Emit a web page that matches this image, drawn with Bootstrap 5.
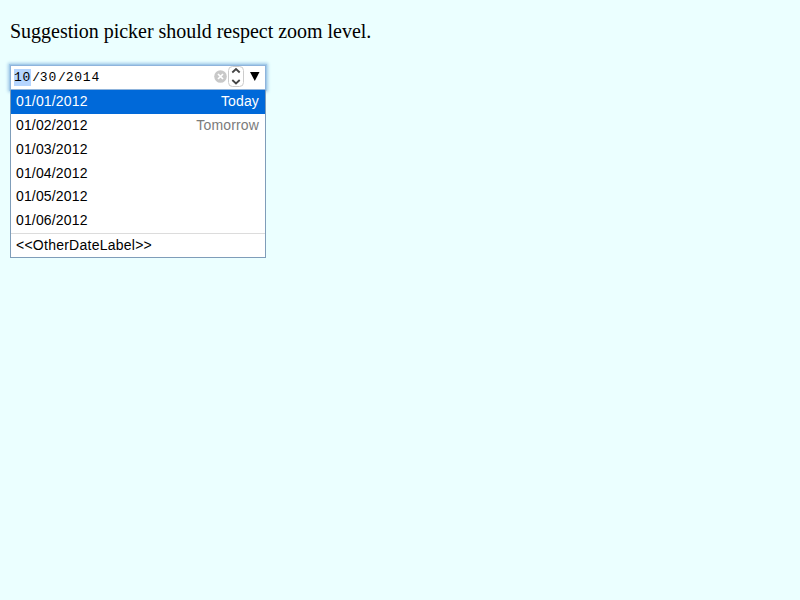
<!DOCTYPE html>
<html lang="en">
<head>
<meta charset="utf-8">
<meta name="viewport" content="width=device-width, initial-scale=1">
<title>Suggestion picker</title>
<link href="https://cdn.jsdelivr.net/npm/bootstrap@5.3.0/dist/css/bootstrap.min.css" rel="stylesheet">
<style>
body{background:#ebffff;color:#000;padding:20px 10px 0}
.intro{font:20px/23px "Liberation Serif",serif;margin-bottom:22px;white-space:nowrap;letter-spacing:-.02px}
.picker{width:256px}
.date-box{height:25px;background:#fff;border:1px solid #8fb4dc;box-shadow:0 0 0 1px #a3cbe9,0 0 3px 2px #a3cbe9;font:13px/17px "Liberation Mono",monospace;padding-left:3px}
.field{height:17px;letter-spacing:.8px}
.separator{padding-left:1px;margin-right:-1px}
.active-field{background:#b5d5ff}
.suggestions{height:168px;background:#fff;border:1px solid #7f9db9;border-top:0;font:14px/23px "Liberation Sans",sans-serif}
.entry{height:23.85px;padding:0 6px 0 5px;letter-spacing:.15px}
.chosen{background:#0069d9;color:#fff}
.note{color:#7b7b7b}
.other{border-top:1px solid #dcdcdc;height:24px;padding-left:5px;letter-spacing:.25px}
</style>
<script src="https://cdn.jsdelivr.net/npm/bootstrap@5.3.0/dist/js/bootstrap.bundle.min.js"></script>
</head>
<body>
<p class="intro">Suggestion picker should respect zoom level.</p>
<main class="picker">
<div class="date-box d-flex align-items-center">
<span class="field active-field">10</span><span class="field separator">/</span><span class="field">30</span><span class="field separator">/</span><span class="field">2014</span>
<svg class="ms-auto" width="52" height="23" viewBox="213 66 52 23"><circle cx="220.5" cy="76.5" r="6.3" fill="#c8c8c8"/><path d="M218 74l5 5m0-5l-5 5" stroke="#fff" stroke-width="1.7"/><rect x="228.5" y="66.5" width="15" height="20" rx="4" fill="#fff" stroke="#ccc"/><path d="M232.3 72.5l3.7-3.5 3.7 3.5m-7.4 7.5l3.7 3.5 3.7-3.5" fill="none" stroke="#444" stroke-width="1.8"/><path d="M250 72h9.5l-4.7 9z"/></svg>
</div>
<div class="suggestions">
<div class="entry chosen d-flex justify-content-between"><span>01/01/2012</span><span>Today</span></div>
<div class="entry d-flex justify-content-between"><span>01/02/2012</span><span class="note">Tomorrow</span></div>
<div class="entry">01/03/2012</div>
<div class="entry">01/04/2012</div>
<div class="entry">01/05/2012</div>
<div class="entry">01/06/2012</div>
<div class="other">&lt;&lt;OtherDateLabel&gt;&gt;</div>
</div>
</main>
</body>
</html>
